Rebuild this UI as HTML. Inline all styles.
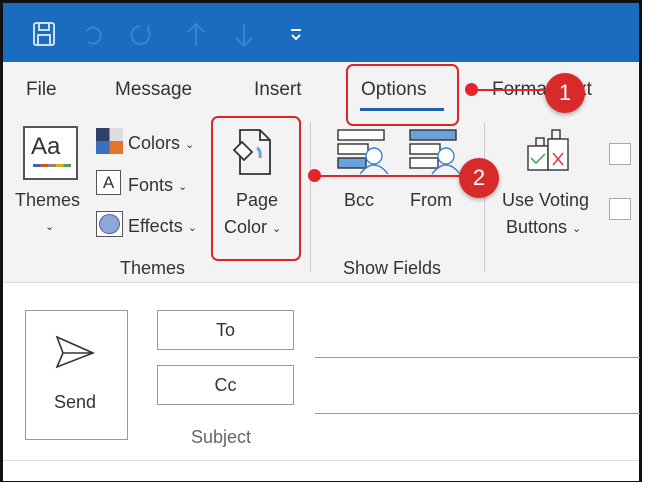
<!DOCTYPE html>
<html><head><style>
*{margin:0;padding:0;box-sizing:border-box}
body{width:646px;height:485px;background:#fff;position:relative;overflow:hidden;font-family:"Liberation Sans",sans-serif;color:#333}
.a{position:absolute}
.t{position:absolute;font-size:19px;color:#333;white-space:nowrap}
.s{font-size:18px}
.car{font-size:11px;vertical-align:middle}
.red{border:2px solid #d9262b;border-radius:7px}
.dot{width:13px;height:13px;border-radius:50%;background:#e3242b}
.badge{width:40px;height:40px;border-radius:50%;background:#d92a2a;color:#fff;font-size:22px;text-align:center;line-height:40px;box-shadow:0 2px 4px rgba(0,0,0,.3)}
</style></head><body>
<div class="a" style="left:0;top:0;width:642px;height:482px;border:3px solid #111;border-bottom-width:3px;background:#f3f3f3"></div>
<div class="a" style="left:3px;top:3px;width:636px;height:59px;background:#1a6cc0"></div>
<div class="a" style="left:3px;top:283px;width:636px;height:198px;background:#fff"></div>
<div class="a" style="left:3px;top:282px;width:636px;height:1px;background:#ddd"></div>
<div class="a" style="left:3px;top:460px;width:636px;height:1px;background:#ddd"></div>
<!-- title icons -->
<svg class="a" style="left:30px;top:20px" width="300" height="32" fill="none">
<g stroke="#cfe0f2" stroke-width="2"><rect x="4" y="3" width="20" height="22" rx="2"/><rect x="9" y="3" width="10" height="7"/><rect x="8" y="15" width="12" height="10"/></g>
<g stroke="#3d82cc" stroke-width="2"><path d="M60 8 A8 8 0 1 1 58 22 M60 8 l-4 3"/><path d="M110 6 A9 9 0 1 0 118 10 M118 10 l1 -5"/><path d="M166 4 v22 M158 12 l8 -8 8 8"/><path d="M214 4 v22 M206 18 l8 8 8 -8"/></g>
<path d="M261 10 h10 M262 15 l4 4 4 -4" stroke="#fff" stroke-width="2"/>
</svg>
<!-- tabs -->
<div class="t" style="left:26px;top:79px">File</div>
<div class="t" style="left:115px;top:79px">Message</div>
<div class="t" style="left:254px;top:79px">Insert</div>
<div class="t" style="left:361px;top:79px">Options</div>
<div class="a" style="left:360px;top:108px;width:84px;height:3px;background:#1f5fae"></div>
<div class="a red" style="left:346px;top:64px;width:113px;height:62px"></div>
<div class="t" style="left:492px;top:79px">Format Text</div>
<!-- themes group -->
<div class="a" style="left:23px;top:126px;width:55px;height:54px;border:2px solid #555;background:#fff"></div>
<div class="a" style="left:31px;top:133px;font-size:24px;color:#333">Aa</div>
<div class="a" style="left:33px;top:164px;width:38px;height:3px;background:linear-gradient(90deg,#3866b0 20%,#d15a1b 20% 40%,#888 40% 60%,#e4a723 60% 80%,#4da34a 80%)"></div>
<div class="t s" style="left:15px;top:190px">Themes</div>
<div class="t car" style="left:45px;top:220px">⌄</div>
<div class="a" style="left:96px;top:128px;width:27px;height:26px;background:linear-gradient(90deg,#2e4266 50%,#ddd 50%)"></div>
<div class="a" style="left:96px;top:141px;width:27px;height:13px;background:linear-gradient(90deg,#3a70c0 50%,#e6752b 50%)"></div>
<div class="t s" style="left:128px;top:133px">Colors <span class="car">⌄</span></div>
<div class="a" style="left:96px;top:170px;width:25px;height:25px;border:1px solid #555;background:#fff;font-size:17px;text-align:center;line-height:23px">A</div>
<div class="t s" style="left:128px;top:175px">Fonts <span class="car">⌄</span></div>
<div class="a" style="left:96px;top:211px;width:27px;height:26px;border:1px solid #555;background:#fff"></div>
<div class="a" style="left:99px;top:214px;width:21px;height:20px;border-radius:50%;background:#8ea6da;border:1px solid #4a62a8"></div>
<div class="t s" style="left:128px;top:216px">Effects <span class="car">⌄</span></div>
<div class="t s" style="left:120px;top:258px">Themes</div>
<div class="a red" style="left:211px;top:116px;width:90px;height:145px"></div>
<svg class="a" style="left:230px;top:128px" width="50" height="50" fill="none" stroke="#333" stroke-width="1.8"><path d="M10 2 h20 l10 10 v34 h-30 z M30 2 v10 h10"/><path d="M4 22 l8 -8 10 10 -8 8 z" fill="#fff"/><path d="M27 20 q4 2 3 10" stroke="#6aa4d8" stroke-width="3"/></svg>
<div class="t s" style="left:236px;top:190px">Page</div>
<div class="t s" style="left:224px;top:217px">Color <span class="car">⌄</span></div>
<div class="a" style="left:310px;top:122px;width:1px;height:150px;background:#ccc"></div>
<!-- show fields -->
<svg class="a" style="left:336px;top:128px" width="130" height="48" fill="none" stroke="#333" stroke-width="1.4">
<rect x="2" y="2" width="46" height="10" fill="#fff"/><rect x="2" y="16" width="30" height="10" fill="#fff"/><rect x="2" y="30" width="28" height="10" fill="#6ba2dc"/>
<circle cx="38" cy="28" r="8" stroke="#3d82cc" fill="#fff"/><path d="M24 46 q14 -18 28 0" stroke="#3d82cc"/>
<rect x="74" y="2" width="46" height="10" fill="#6ba2dc"/><rect x="74" y="16" width="30" height="10" fill="#fff"/><rect x="74" y="30" width="28" height="10" fill="#fff"/>
<circle cx="110" cy="28" r="8" stroke="#3d82cc" fill="#fff"/><path d="M96 46 q14 -18 28 0" stroke="#3d82cc"/></svg>
<div class="t s" style="left:344px;top:190px">Bcc</div>
<div class="t s" style="left:410px;top:190px">From</div>
<div class="t s" style="left:343px;top:258px">Show Fields</div>
<div class="a" style="left:484px;top:122px;width:1px;height:150px;background:#ccc"></div>
<svg class="a" style="left:524px;top:128px" width="50" height="50" fill="none" stroke="#333" stroke-width="1.4"><rect x="12" y="10" width="8" height="8"/><rect x="28" y="2" width="8" height="9"/><rect x="4" y="18" width="20" height="24" fill="#fff"/><rect x="24" y="11" width="20" height="31" fill="#fff"/><path d="M7 30 l5 5 9 -9" stroke="#3b9a4a"/><path d="M29 25 l10 12 M39 25 l-10 12" stroke="#d33"/></svg>
<div class="t s" style="left:502px;top:190px">Use Voting</div>
<div class="t s" style="left:506px;top:217px">Buttons <span class="car">⌄</span></div>
<div class="a" style="left:609px;top:143px;width:22px;height:22px;border:1px solid #aaa;background:#fff"></div>
<div class="a" style="left:609px;top:198px;width:22px;height:22px;border:1px solid #aaa;background:#fff"></div>
<!-- callouts -->
<div class="a" style="left:471px;top:89px;width:90px;height:2px;background:#e3242b"></div>
<div class="a dot" style="left:465px;top:83px"></div>
<div class="a badge" style="left:545px;top:73px">1</div>
<div class="a" style="left:314px;top:175px;width:150px;height:2px;background:#e3242b"></div>
<div class="a dot" style="left:308px;top:169px"></div>
<div class="a badge" style="left:459px;top:158px">2</div>
<!-- compose -->
<div class="a" style="left:25px;top:310px;width:103px;height:130px;border:1px solid #999"></div>
<svg class="a" style="left:55px;top:335px" width="42" height="36" fill="none" stroke="#333" stroke-width="1.6"><path d="M2 2 L38 18 L2 32 L8 18 Z M8 18 H38"/></svg>
<div class="t s" style="left:54px;top:392px">Send</div>
<div class="a" style="left:157px;top:310px;width:137px;height:40px;border:1px solid #999;text-align:center;line-height:38px;font-size:18px">To</div>
<div class="a" style="left:157px;top:365px;width:137px;height:40px;border:1px solid #999;text-align:center;line-height:38px;font-size:18px">Cc</div>
<div class="t s" style="left:191px;top:427px;color:#666">Subject</div>
<div class="a" style="left:315px;top:357px;width:325px;height:1px;background:#999"></div>
<div class="a" style="left:315px;top:413px;width:325px;height:1px;background:#999"></div>
</body></html>
